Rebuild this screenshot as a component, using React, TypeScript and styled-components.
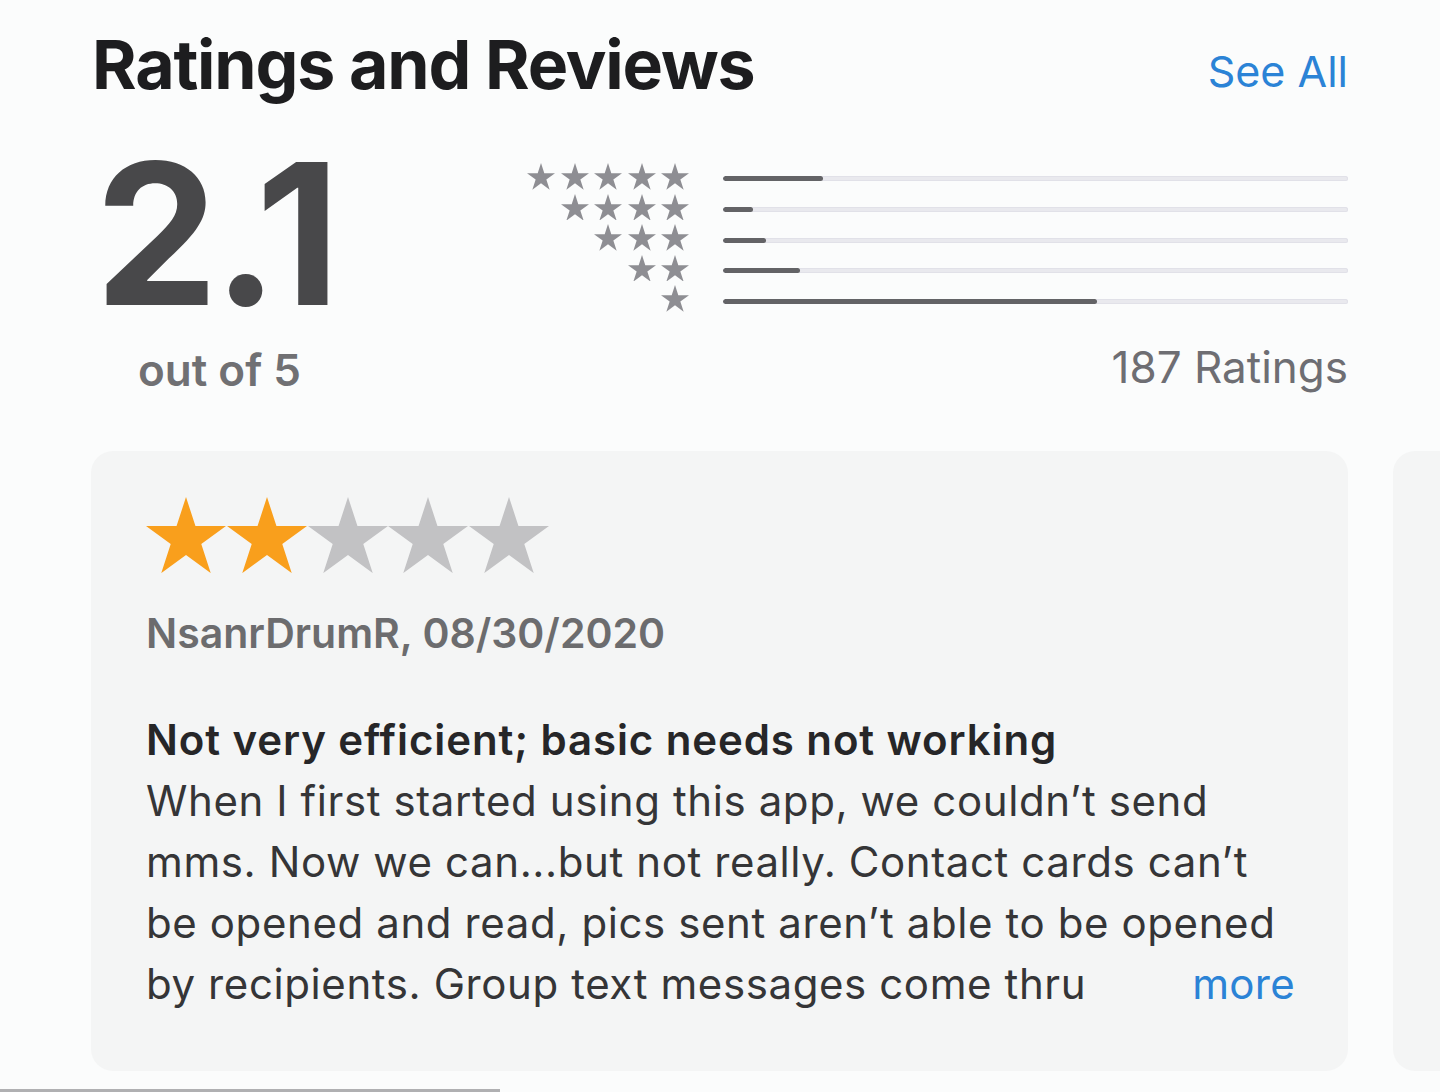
import React from "react";
import styled, { createGlobalStyle } from "styled-components";

const GlobalStyle = createGlobalStyle`
  html, body {
    margin: 0;
    padding: 0;
    background: #fbfcfc;
  }
  body {
    font-family: Inter, "Noto Sans", "Liberation Sans", sans-serif;
    -webkit-font-smoothing: antialiased;
  }
`;

const Page = styled.div`
  width: 1440px;
  height: 1092px;
  overflow: hidden;
  display: flex;
  flex-direction: column;
  background: #fbfcfc;
`;

const Section = styled.section`
  padding: 23px 92px 0 92px;
  display: flex;
  flex-direction: column;
`;

const Header = styled.header`
  display: flex;
  align-items: baseline;
  justify-content: space-between;
`;

const Title = styled.h1`
  margin: 0;
  font-size: 68px;
  line-height: 83px;
  font-weight: 700;
  letter-spacing: -1.2px;
  color: #1d1d1f;
`;

const SeeAll = styled.a`
  font-size: 43px;
  font-weight: 400;
  color: #2b83d6;
  text-decoration: none;
  position: relative;
  top: -2px;
`;

const Summary = styled.div`
  display: flex;
  justify-content: space-between;
  margin-top: 26px;
`;

const ScoreBlock = styled.div`
  display: flex;
  flex-direction: column;
  align-items: center;
  width: 246px;
`;

const Score = styled.div`
  margin-top: 4px;
  font-size: 196px;
  line-height: 196px;
  font-weight: 700;
  letter-spacing: -5px;
  color: #48484a;
`;

const OutOf = styled.div`
  margin-top: 13px;
  margin-left: 9px;
  font-size: 44px;
  line-height: 50px;
  font-weight: 600;
  color: #707073;
`;

const Histogram = styled.div`
  display: flex;
  flex-direction: column;
  align-items: flex-end;
  width: 822px;
  padding-top: 31px;
`;

const Rows = styled.div`
  display: flex;
  flex-direction: column;
  gap: 3.8px;
  width: 100%;
`;

const Row = styled.div`
  display: flex;
  align-items: center;
  gap: 34px;
  height: 26.8px;
`;

const StarGroup = styled.div`
  width: 163px;
  display: flex;
  justify-content: flex-end;
  gap: 5.5px;
`;

const Track = styled.div`
  flex: 1;
  height: 5px;
  border-radius: 3px;
  background: #e9e9ee;
  box-shadow: inset 0 0 0 1px #e1e1e8;
  overflow: hidden;
  margin-top: 5px;
`;

const Fill = styled.div`
  height: 100%;
  border-radius: 3px;
  background: #636366;
`;

const Count = styled.div`
  margin-top: 30px;
  font-size: 44px;
  line-height: 50px;
  font-weight: 400;
  color: #6e6e73;
`;

const Strip = styled.div`
  display: flex;
  gap: 45px;
  margin-top: 56px;
  padding-left: 91px;
  overflow: hidden;
`;

const Card = styled.article`
  flex: 0 0 1257px;
  height: 620px;
  box-sizing: border-box;
  padding: 46px 53px 0 55px;
  border-radius: 22px;
  background: #f4f5f5;
  display: flex;
  flex-direction: column;
`;

const CardStars = styled.div`
  display: flex;
  gap: 0.8px;
`;

const Author = styled.div`
  margin-top: 35px;
  font-size: 41px;
  line-height: 50px;
  font-weight: 600;
  letter-spacing: 0;
  color: #6c6c6e;
`;

const ReviewTitle = styled.h2`
  margin: 51px 0 0 0;
  font-size: 42px;
  line-height: 61px;
  font-weight: 600;
  letter-spacing: 0.9px;
  color: #262628;
`;

const Body = styled.div`
  display: flex;
  flex-direction: column;
  font-size: 42px;
  line-height: 61px;
  font-weight: 400;
  letter-spacing: 0.6px;
  color: #353537;
`;

const Line = styled.div`
  white-space: nowrap;
  display: flex;
  justify-content: space-between;
`;

const More = styled.a`
  color: #2b83d6;
  text-decoration: none;
  letter-spacing: 0.3px;
`;

const ScrollBar = styled.div`
  margin-top: 18px;
  width: 500px;
  height: 3px;
  background: #b0b0b2;
`;

const StarSvg = styled.svg<{ $size: number }>`
  width: ${(p) => p.$size}px;
  height: ${(p) => p.$size * 0.951}px;
  display: block;
  flex: none;
`;

const Star = ({ size, color }: { size: number; color: string }) => (
  <StarSvg $size={size} viewBox="0 0 95.1 90.45">
    <polygon
      fill={color}
      points="47.55,0 58.78,34.55 95.1,34.55 65.72,55.9 76.94,90.45 47.55,69.1 18.16,90.45 29.38,55.9 0,34.55 36.32,34.55"
    />
  </StarSvg>
);

const distribution = [
  { stars: 5, count: 30 },
  { stars: 4, count: 9 },
  { stars: 3, count: 13 },
  { stars: 2, count: 23 },
  { stars: 1, count: 112 },
];
const total = 187;

const reviewLines = [
  "When I first started using this app, we couldn’t send",
  "mms. Now we can...but not really. Contact cards can’t",
  "be opened and read, pics sent aren’t able to be opened",
];

export default function App() {
  return (
    <>
      <GlobalStyle />
      <Page>
        <Section>
          <Header>
            <Title>Ratings and Reviews</Title>
            <SeeAll href="#">See All</SeeAll>
          </Header>
          <Summary>
            <ScoreBlock>
              <Score>2.1</Score>
              <OutOf>out of 5</OutOf>
            </ScoreBlock>
            <Histogram>
              <Rows>
                {distribution.map((d) => (
                  <Row key={d.stars}>
                    <StarGroup>
                      {Array.from({ length: d.stars }).map((_, i) => (
                        <Star key={i} size={28} color="#8e8e93" />
                      ))}
                    </StarGroup>
                    <Track>
                      <Fill style={{ width: `${(d.count / total) * 100}%` }} />
                    </Track>
                  </Row>
                ))}
              </Rows>
              <Count>{total} Ratings</Count>
            </Histogram>
          </Summary>
        </Section>
        <Strip>
          <Card>
            <CardStars>
              {[0, 1, 2, 3, 4].map((i) => (
                <Star key={i} size={80} color={i < 2 ? "#f99f1c" : "#c2c2c4"} />
              ))}
            </CardStars>
            <Author>NsanrDrumR, 08/30/2020</Author>
            <ReviewTitle>Not very efficient; basic needs not working</ReviewTitle>
            <Body>
              {reviewLines.map((l) => (
                <Line key={l}>{l}</Line>
              ))}
              <Line>
                <span>by recipients. Group text messages come thru</span>
                <More href="#">more</More>
              </Line>
            </Body>
          </Card>
          <Card />
        </Strip>
        <ScrollBar />
      </Page>
    </>
  );
}
